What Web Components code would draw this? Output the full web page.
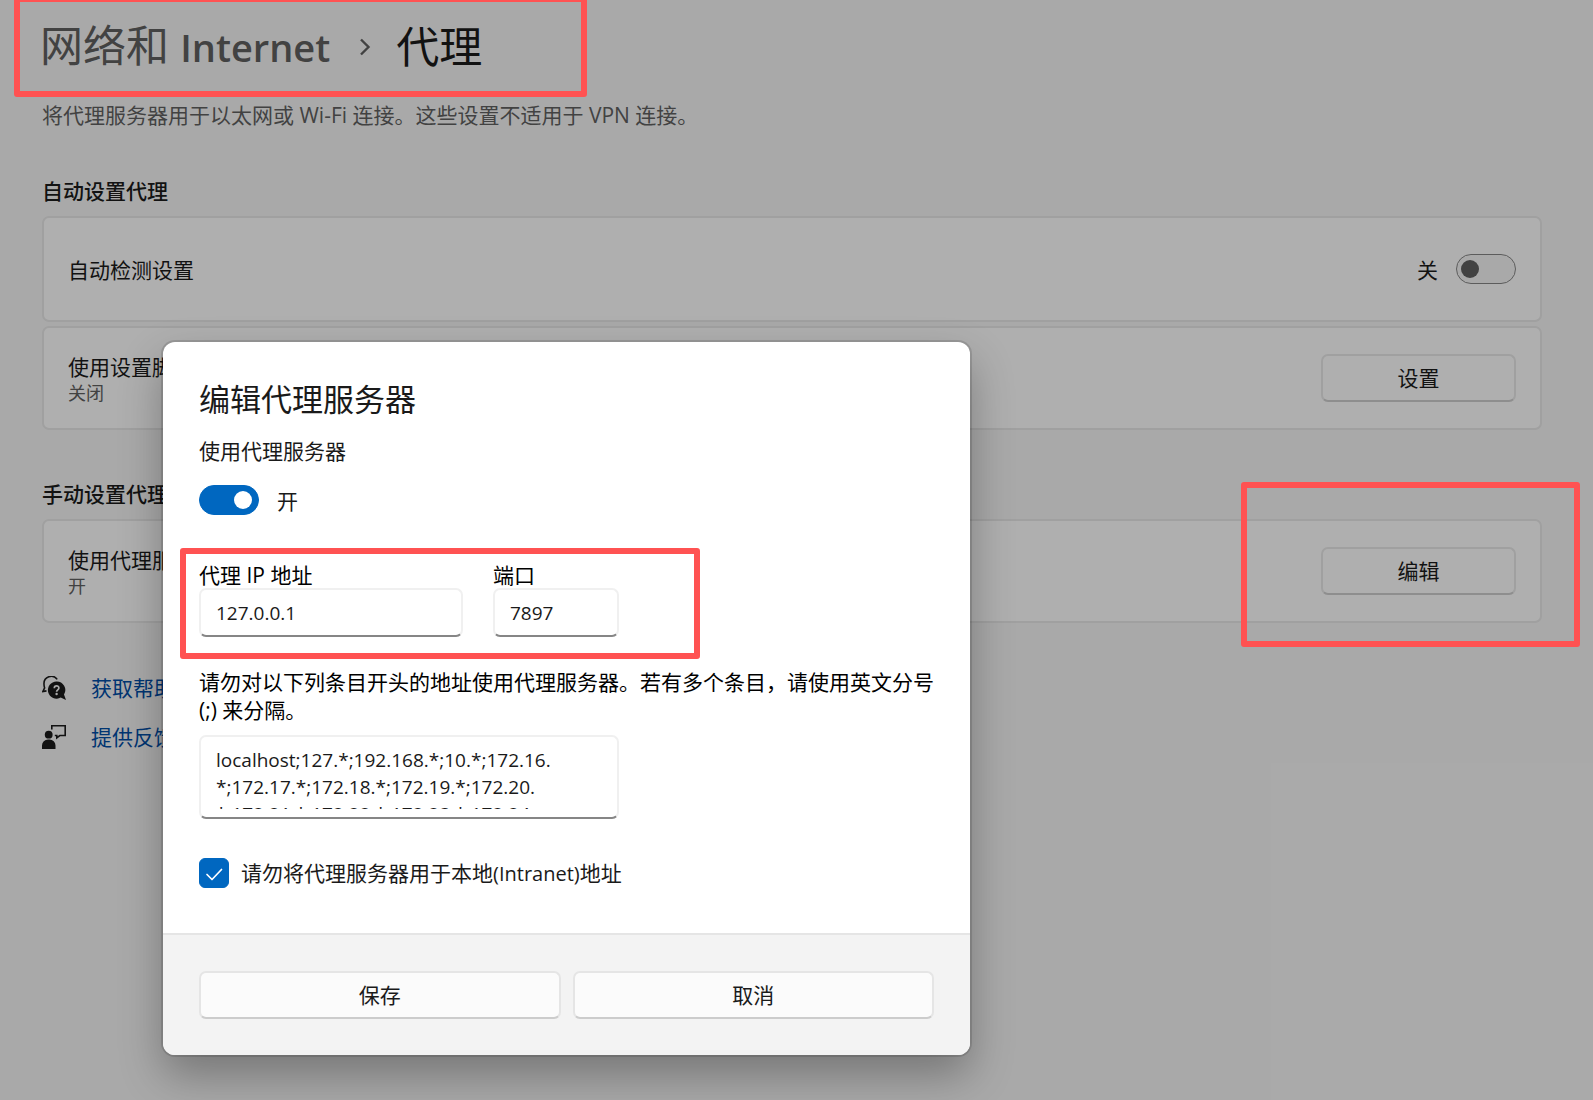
<!DOCTYPE html>
<html lang="zh-CN">
<head>
<meta charset="utf-8">
<title>网络和 Internet › 代理</title>
<style>
  body {
    --text: #1a1a1a;
    --muted: #5f5f5f;
    --accent: #0067c0;
    --link: #004ca4;
    --mark: #ff5252;
    margin: 0;
    min-height: 100vh;
    background: #f3f3f3;
    color: var(--text);
    font-family: "Open Sans", "Noto Sans CJK SC", sans-serif;
    font-size: 21px;
    line-height: 28px;
  }
</style>
</head>
<body>

<proxy-page>
  <page-title slot="title" parent="网络和" product="Internet" current="代理"></page-title>
  <span slot="intro">将代理服务器用于以太网或 Wi-Fi 连接。这些设置不适用于 VPN 连接。</span>

  <settings-group heading="自动设置代理">
    <settings-card class="tall">
      自动检测设置
      <win-toggle slot="action" label="关" reverse></win-toggle>
    </settings-card>
    <settings-card>
      使用设置脚本
      <span slot="status">关闭</span>
      <win-button slot="action">设置</win-button>
    </settings-card>
  </settings-group>

  <settings-group heading="手动设置代理">
    <settings-card>
      使用代理服务器
      <span slot="status">开</span>
      <win-button slot="action">编辑</win-button>
    </settings-card>
  </settings-group>

  <help-link slot="help">
    <svg slot="icon" viewBox="0 0 24 24" width="24" height="24">
      <path d="M15.2 3.4A7.3 7.3 0 0 0 2 8.2c0 1.600.2 2.700 .6 3.700L.8 15.600l3.700-.7" fill="none" stroke="#1a1a1a" stroke-width="1.600"/>
      <path d="M14.500 5.500a8.600 8.600 0 1 0 4.200 16.100L24 24l-2-5.400A8.600 8.600 0 0 0 14.500 5.500z" fill="#1a1a1a"/>
      <path d="M12.300 12.200c0-3 4.600-3 4.600-.2 0 1.900-2.300 1.900-2.300 3.800" fill="none" stroke="#f3f3f3" stroke-width="1.700"/>
      <circle cx="14.600" cy="18" r="1.200" fill="#f3f3f3"/>
    </svg>
    获取帮助
  </help-link>
  <help-link slot="help">
    <svg slot="icon" viewBox="0 0 24 24" width="24" height="24">
      <circle cx="6.700" cy="9.700" r="3.900" fill="#1a1a1a"/>
      <path d="M0 24v-3.500a6 6 0 0 1 6-6h1.500a6 6 0 0 1 6 6V24z" fill="#1a1a1a"/>
      <path d="M9.800 4.500V.8h13.400v9.700h-5.400l-3 2.300v-2.300h-2" fill="none" stroke="#1a1a1a" stroke-width="1.600"/>
    </svg>
    提供反馈
  </help-link>
</proxy-page>

<proxy-dialog></proxy-dialog>

<mark-frame style="--x: 14px; --y: -4px; --w: 573px; --h: 101px"></mark-frame>
<mark-frame style="--x: 180px; --y: 548px; --w: 520px; --h: 111px"></mark-frame>
<mark-frame style="--x: auto; --r: 13px; --y: 482px; --w: 339px; --h: 165px"></mark-frame>

<script>
// Attach an open shadow root and fill it
const render = (el, html) => {
  el.attachShadow({ mode: 'open' }).innerHTML = html;
};

class PageTitle extends HTMLElement {
  constructor() {
    super();
    render(this, `
      <style>
        :host { display: block; }
        h1 {
          display: flex;
          align-items: center;
          margin: 0 0 0 -2px;
          font-size: 43px;
          line-height: 58px;
          font-weight: 400;
        }
        .parent { color: var(--muted); }
        b { font-size: 38px; font-weight: 600; }
        svg { margin: 0 25px 0 29px; }
      </style>
      <h1>
        <span class="parent">${this.getAttribute('parent')} <b>${this.getAttribute('product')}</b></span>
        <svg width="12" height="18" viewBox="0 0 12 18" fill="none" stroke="#5f5f5f" stroke-width="2.4"><path d="M2 1.500 9.500 9 2 16.500"/></svg>
        <span>${this.getAttribute('current')}</span>
      </h1>
    `);
  }
}

class ProxyPage extends HTMLElement {
  constructor() {
    super();
    render(this, `
      <style>
        :host { display: block; }
        main {
          display: flex;
          flex-direction: column;
          padding: 17px 51px 0 42px;
        }
        p { margin: 25px 0 0; color: var(--muted); }
        .help {
          display: flex;
          flex-direction: column;
          align-items: flex-start;
          gap: 21px;
          margin-top: 51px;
        }
      </style>
      <main>
        <slot name="title"></slot>
        <p><slot name="intro"></slot></p>
        <slot></slot>
        <div class="help"><slot name="help"></slot></div>
      </main>
    `);
  }
}

class SettingsGroup extends HTMLElement {
  constructor() {
    super();
    render(this, `
      <style>
        :host { display: block; margin-top: 48px; }
        :host(:nth-of-type(n + 2)) { margin-top: 50px; }
        h2 { margin: 0 0 11px; font-size: 21px; font-weight: 500; }
        div { display: flex; flex-direction: column; gap: 4px; }
      </style>
      <h2>${this.getAttribute('heading')}</h2>
      <div><slot></slot></div>
    `);
  }
}

class SettingsCard extends HTMLElement {
  constructor() {
    super();
    render(this, `
      <style>
        :host {
          display: flex;
          align-items: center;
          justify-content: space-between;
          box-sizing: border-box;
          min-height: 104px;
          padding: 0 24px;
          border: 2px solid #e5e5e5;
          border-radius: 7px;
          background: #fbfbfb;
        }
        :host(.tall) { min-height: 106px; }
        .text { padding-top: 2px; }
        .status {
          color: var(--muted);
          font-size: 18px;
          line-height: 24px;
        }
      </style>
      <div class="text">
        <div><slot></slot></div>
        <div class="status"><slot name="status"></slot></div>
      </div>
      <slot name="action"></slot>
    `);
  }
}

class WinButton extends HTMLElement {
  constructor() {
    super();
    render(this, `
      <style>
        :host { display: block; width: 195px; }
        button {
          width: 100%;
          height: 48px;
          padding: 0;
          border: 2px solid #e5e5e5;
          border-bottom-color: #cccccc;
          border-radius: 7px;
          background: #fbfbfb;
          color: var(--text);
          font: inherit;
        }
      </style>
      <button type="button"><slot></slot></button>
    `);
  }
}

class WinToggle extends HTMLElement {
  constructor() {
    super();
    const on = this.hasAttribute('on') ? 'checked' : '';
    render(this, `
      <style>
        :host { display: block; }
        label { display: flex; align-items: center; gap: 18px; }
        :host([reverse]) label { flex-direction: row-reverse; }
        span { padding-top: 2px; }
        input {
          appearance: none;
          display: flex;
          align-items: center;
          box-sizing: border-box;
          width: 60px;
          height: 30px;
          margin: 0;
          padding: 0 4px;
          border: 1px solid #858585;
          border-radius: 15px;
          background: #f3f3f3;
        }
        input::before {
          content: '';
          width: 18px;
          height: 18px;
          border-radius: 50%;
          background: var(--muted);
        }
        input:checked {
          justify-content: flex-end;
          padding: 0 6px;
          border-color: var(--accent);
          background: var(--accent);
        }
        input:checked::before { background: #fff; }
      </style>
      <label><input type="checkbox" role="switch" ${on}><span>${this.getAttribute('label')}</span></label>
    `);
  }
}

class HelpLink extends HTMLElement {
  constructor() {
    super();
    render(this, `
      <style>
        :host { display: block; }
        a {
          display: flex;
          align-items: center;
          gap: 25px;
          color: var(--link);
          text-decoration: none;
        }
        ::slotted(svg) { display: block; }
      </style>
      <a href="#"><slot name="icon"></slot><span><slot></slot></span></a>
    `);
  }
}

class WinField extends HTMLElement {
  constructor() {
    super();
    render(this, `
      <style>
        :host { display: block; }
        label { display: block; line-height: 26px; color: #000; }
        input {
          display: block;
          box-sizing: border-box;
          width: 100%;
          height: 49px;
          padding: 0 15px;
          border: 2px solid #f0f0f0;
          border-bottom-color: #868686;
          border-radius: 7px;
          background: #fff;
          color: var(--text);
          font: inherit;
          font-size: 19px;
        }
      </style>
      <label for="box">${this.getAttribute('label')}</label>
      <input id="box" type="text" value="${this.getAttribute('value')}">
    `);
  }
}

class WinCheckbox extends HTMLElement {
  constructor() {
    super();
    render(this, `
      <style>
        :host { display: block; }
        label { display: flex; align-items: center; gap: 12px; }
        .box { display: grid; }
        input, svg { grid-area: 1 / 1; }
        input {
          appearance: none;
          width: 30px;
          height: 30px;
          margin: 0;
          border: 1px solid #868686;
          border-radius: 6px;
        }
        input:checked { border-color: var(--accent); background: var(--accent); }
        svg { pointer-events: none; }
      </style>
      <label>
        <span class="box">
          <input type="checkbox" checked>
          <svg width="30" height="30" viewBox="0 0 30 30" fill="none" stroke="#fff" stroke-width="1.700" stroke-linecap="round" stroke-linejoin="round"><path d="M8 16.500l5 5L22.500 11.500"/></svg>
        </span>
        <span><slot></slot></span>
      </label>
    `);
  }
}

class ProxyDialog extends HTMLElement {
  constructor() {
    super();
    render(this, `
      <style>
        /* smoke layer over the settings page */
        :host {
          display: block;
          position: absolute;
          inset: 0;
          background: rgba(0, 0, 0, .3);
          overflow: hidden;
        }
        section {
          position: absolute;
          top: 342px;
          left: 163px;
          width: 807px;
          border-radius: 12px;
          background: #fff;
          box-shadow: 0 0 0 2px rgba(0, 0, 0, .12), 0 20px 44px rgba(0, 0, 0, .3);
        }
        .body { padding: 37px 36px 45px; }
        h2 { margin: 0 0 18px; font-size: 31px; line-height: 40px; font-weight: 400; }
        win-toggle { margin-top: 20px; }
        .fields { display: flex; gap: 30px; margin-top: 47px; }
        .ip { width: 264px; }
        .port { width: 126px; }
        .hint { display: block; margin: 31px 0 11px; color: #000; }
        .area {
          box-sizing: border-box;
          width: 420px;
          height: 84px;
          padding: 10px 15px 8px;
          border: 2px solid #f0f0f0;
          border-bottom-color: #868686;
          border-radius: 7px;
        }
        textarea {
          display: block;
          width: 100%;
          height: 100%;
          padding: 0;
          border: 0;
          outline: 0;
          resize: none;
          overflow: hidden;
          background: none;
          color: var(--text);
          font: inherit;
          font-size: 19px;
          line-height: 27px;
        }
        win-checkbox { margin-top: 39px; }
        small { font-size: 20px; }
        footer {
          display: grid;
          grid-template-columns: 1fr 1fr;
          gap: 12px;
          padding: 36px;
          border-top: 2px solid #e5e5e5;
          border-radius: 0 0 12px 12px;
          background: #f3f3f3;
        }
        footer win-button { width: auto; }
      </style>
      <section role="dialog" aria-labelledby="title">
        <div class="body">
          <h2 id="title">编辑代理服务器</h2>
          <div>使用代理服务器</div>
          <win-toggle label="开" on></win-toggle>
          <div class="fields">
            <win-field class="ip" label="代理 IP 地址" value="127.0.0.1"></win-field>
            <win-field class="port" label="端口" value="7897"></win-field>
          </div>
          <label class="hint" for="bypass">请勿对以下列条目开头的地址使用代理服务器。若有多个条目，请使用英文分号 (;) 来分隔。</label>
          <div class="area"><textarea id="bypass" spellcheck="false">localhost;127.*;192.168.*;10.*;172.16.
*;172.17.*;172.18.*;172.19.*;172.20.
*;172.21.*;172.22.*;172.23.*;172.24.</textarea></div>
          <win-checkbox>请勿将代理服务器用于本地<small>(Intranet)</small>地址</win-checkbox>
        </div>
        <footer>
          <win-button>保存</win-button>
          <win-button>取消</win-button>
        </footer>
      </section>
    `);
  }
}

// Red frame drawn over the part being pointed at
class MarkFrame extends HTMLElement {
  constructor() {
    super();
    render(this, `
      <style>
        :host {
          position: absolute;
          top: var(--y);
          left: var(--x);
          right: var(--r, auto);
          box-sizing: border-box;
          width: var(--w);
          height: var(--h);
          border: 6px solid var(--mark);
          border-radius: 3px;
          pointer-events: none;
        }
      </style>
    `);
  }
}

customElements.define('page-title', PageTitle);
customElements.define('proxy-page', ProxyPage);
customElements.define('settings-group', SettingsGroup);
customElements.define('settings-card', SettingsCard);
customElements.define('win-button', WinButton);
customElements.define('win-toggle', WinToggle);
customElements.define('help-link', HelpLink);
customElements.define('win-field', WinField);
customElements.define('win-checkbox', WinCheckbox);
customElements.define('proxy-dialog', ProxyDialog);
customElements.define('mark-frame', MarkFrame);
</script>
</body>
</html>
